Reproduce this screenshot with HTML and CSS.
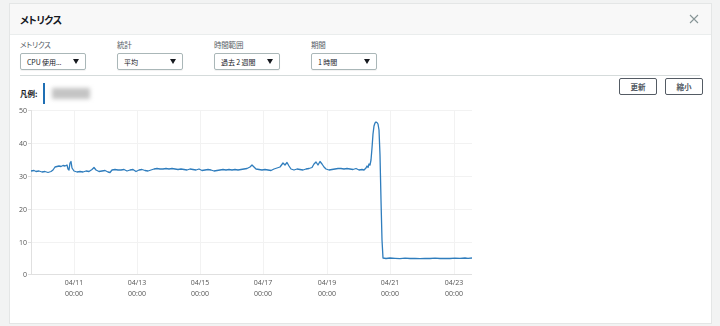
FILE: index.html
```html
<!DOCTYPE html>
<html lang="ja">
<head>
<meta charset="utf-8">
<title>メトリクス</title>
<link rel="stylesheet" href="styles.css">
</head>
<body>
<div class="page">
  <div class="modal">
    <div class="modal-header">
      <h1 class="title">メトリクス</h1>
      <svg class="close" width="10" height="10" viewBox="0 0 10 10"><path d="M1 1L9 9M9 1L1 9" stroke="#879596" stroke-width="1.1" fill="none"/></svg>
    </div>
    <div class="controls">
      <div class="field">
        <div class="field-label">メトリクス</div>
        <div class="select"><span>CPU 使用...</span><i class="caret"></i></div>
      </div>
      <div class="field">
        <div class="field-label">統計</div>
        <div class="select"><span>平均</span><i class="caret"></i></div>
      </div>
      <div class="field">
        <div class="field-label">時間範囲</div>
        <div class="select"><span>過去 2 週間</span><i class="caret"></i></div>
      </div>
      <div class="field">
        <div class="field-label">期間</div>
        <div class="select"><span>1 時間</span><i class="caret"></i></div>
      </div>
    </div>
    <div class="divider"></div>
    <div class="toolbar">
      <div class="legend">
        <span class="legend-label">凡例:</span>
        <span class="legend-bar"></span>
        <span class="legend-blur"></span>
      </div>
      <div class="buttons">
        <button class="btn">更新</button>
        <button class="btn">縮小</button>
      </div>
    </div>
    <svg class="chart" width="470" height="200" viewBox="10 104 470 200">
      <g class="grid">
        <line x1="31" y1="110.5" x2="472" y2="110.5"/>
        <line x1="31" y1="143.5" x2="472" y2="143.5"/>
        <line x1="31" y1="176.5" x2="472" y2="176.5"/>
        <line x1="31" y1="209.5" x2="472" y2="209.5"/>
        <line x1="31" y1="242.5" x2="472" y2="242.5"/>
        <line x1="74.5" y1="110" x2="74.5" y2="274"/>
        <line x1="137.5" y1="110" x2="137.5" y2="274"/>
        <line x1="200.5" y1="110" x2="200.5" y2="274"/>
        <line x1="263.5" y1="110" x2="263.5" y2="274"/>
        <line x1="327.5" y1="110" x2="327.5" y2="274"/>
        <line x1="390.5" y1="110" x2="390.5" y2="274"/>
        <line x1="454.5" y1="110" x2="454.5" y2="274"/>
      </g>
      <g class="axis">
        <line x1="31.5" y1="110" x2="31.5" y2="274"/>
        <line x1="31" y1="274.5" x2="472" y2="274.5"/>
        <line x1="28" y1="110.5" x2="31" y2="110.5"/>
        <line x1="28" y1="143.5" x2="31" y2="143.5"/>
        <line x1="28" y1="176.5" x2="31" y2="176.5"/>
        <line x1="28" y1="209.5" x2="31" y2="209.5"/>
        <line x1="28" y1="242.5" x2="31" y2="242.5"/>
        <line x1="28" y1="274.5" x2="31" y2="274.5"/>
      </g>
      <g class="ylabels">
        <text x="27" y="112.5">50</text>
        <text x="27" y="145.5">40</text>
        <text x="27" y="178.5">30</text>
        <text x="27" y="211.5">20</text>
        <text x="27" y="244.5">10</text>
        <text x="27" y="276.5">0</text>
      </g>
      <g class="xlabels">
        <text x="74" y="285">04/11</text><text x="74" y="296">00:00</text>
        <text x="137" y="285">04/13</text><text x="137" y="296">00:00</text>
        <text x="200" y="285">04/15</text><text x="200" y="296">00:00</text>
        <text x="263" y="285">04/17</text><text x="263" y="296">00:00</text>
        <text x="327" y="285">04/19</text><text x="327" y="296">00:00</text>
        <text x="390" y="285">04/21</text><text x="390" y="296">00:00</text>
        <text x="454" y="285">04/23</text><text x="454" y="296">00:00</text>
      </g>
      <polyline class="series" points="31,171 34,170.5 36,171.5 39,171 42,172 45,171.5 48,172.5 51,171.5 53,170 55,167 57,166.5 59,166 61,166.5 63,165.5 65,166 67,165 68,169 69,170 70,163 71,161.5 72,168 74,171 77,172 80,171.5 83,172 86,171 89,171.5 92,169.5 94,167.5 96,170 99,171.5 102,171 105,170.5 108,172 110,172.5 112,170 115,169.5 118,170 121,170 124,169.5 127,171 130,170 133,169.5 136,171.5 139,170 142,169.5 145,170.5 148,171 151,170 154,169 157,168.5 160,169 163,169 166,168.5 169,169 172,168.5 175,169 178,169.5 181,169 184,169.5 187,170 190,169 193,169.5 196,170 199,169 202,170.5 205,170 208,169.5 211,170 214,171 217,170.5 220,170 223,169.5 226,170 229,169.5 232,170 235,169.5 238,170 241,169.5 244,169 247,168.5 250,167 252,165 254,167 256,169 259,169.5 262,170 265,169.5 268,170 271,170.5 274,169 277,168 280,167 283,163 285,165 287,162.5 289,166 291,169 294,170 297,169 300,169.5 303,170 306,169 309,168.5 312,167.5 314,164 316,162 318,165 320,161.5 322,164 324,167 326,169 329,170 332,169.5 335,169 338,168.5 341,168.5 344,169 347,168.5 350,169 353,169.5 356,168.5 359,170 362,169.5 364,170 366,168 367,166 368,167.5 369,164 370,165 371,160 372,148 373,134 374,126 375,123 376,122 377,122.5 378,124 379,130 380,155 381,200 382,240 383,258 386,258.5 390,258 395,258.3 400,258.6 405,258.2 410,258.5 415,258.3 420,258.6 425,258.4 430,258.5 435,258.2 440,258.5 445,258.3 450,258.5 455,258.2 460,258.4 465,258 468,258.3 472,258"/>
    </svg>
  </div>
</div>
</body>
</html>
```
FILE: styles.css
```css
* { box-sizing: border-box; }
html, body { margin: 0; padding: 0; }
body {
  background: #f2f3f3;
  font-family: "Noto Sans CJK JP", "Open Sans", sans-serif;
  font-feature-settings: "palt";
  color: #16191f;
}
.page {
  padding: 3px 8px 0 9px;
}
.modal {
  width: 703px;
  height: 321px;
  background: #fff;
  border: 1px solid #e4e6e6;
  display: flex;
  flex-direction: column;
}
.modal-header {
  height: 31px;
  background: #f8f8f8;
  border-bottom: 1px solid #eaeded;
  display: flex;
  align-items: center;
  justify-content: space-between;
  padding: 0 12px 0 10px;
}
.title {
  margin: 0;
  font-size: 10px;
  letter-spacing: -0.5px;
  font-weight: 700;
  color: #16191f;
}
.close { display: block; }
.controls {
  display: flex;
  gap: 31px;
  padding: 4px 10px 0;
}
.field { width: 66px; }
.field-label {
  font-size: 7.5px;
  letter-spacing: -0.2px;
  line-height: 12px;
  color: #545b64;
}
.select {
  margin-top: 2px;
  height: 17px;
  border: 1px solid #aab7b8;
  border-radius: 2px;
  box-shadow: 0 1px 1px rgba(0,0,0,0.06);
  display: flex;
  align-items: center;
  justify-content: space-between;
  padding: 0 6px 0 6px;
  font-size: 7px;
  letter-spacing: -0.1px;
  color: #16191f;
}
.caret {
  width: 0;
  height: 0;
  border-left: 3px solid transparent;
  border-right: 3px solid transparent;
  border-top: 5px solid #16191f;
}
.divider {
  margin: 5px 11px 0 10px;
  border-top: 1px solid #d5dbdb;
}
.toolbar {
  margin-top: 2px;
  height: 26px;
  display: flex;
  justify-content: space-between;
  align-items: flex-start;
  padding: 0 8px 0 10px;
}
.legend {
  margin-top: 5px;
  height: 21px;
  display: flex;
  align-items: center;
}
.legend-label {
  font-size: 7.5px;
  font-weight: 700;
  color: #16191f;
}
.legend-bar {
  width: 2px;
  height: 21px;
  background: #1f6fb4;
  margin-left: 6px;
}
.legend-blur {
  margin-left: 7px;
  width: 38px;
  height: 11px;
  background: #c4c4c4;
  filter: blur(2px);
}
.buttons {
  display: flex;
  gap: 8px;
}
.btn {
  width: 38px;
  height: 17px;
  padding: 0;
  background: #fff;
  border: 1px solid #545b64;
  border-radius: 2px;
  font-family: "Noto Sans CJK JP", sans-serif;
  font-size: 7.5px;
  font-weight: 700;
  color: #545b64;
  line-height: 15px;
}
.chart { display: block; will-change: transform; }
.grid line { stroke: #f2f2f2; stroke-width: 1; }
.axis line { stroke: #e0e0e0; stroke-width: 1; }
.ylabels text {
  font-family: "Open Sans", sans-serif;
  font-size: 7px;
  fill: #555;
  text-anchor: end;
}
.xlabels text {
  font-family: "Open Sans", sans-serif;
  font-size: 7px;
  fill: #555;
  text-anchor: middle;
}
.series {
  fill: none;
  stroke: #2f7dbd;
  stroke-width: 1.3;
  stroke-linejoin: round;
}
```
